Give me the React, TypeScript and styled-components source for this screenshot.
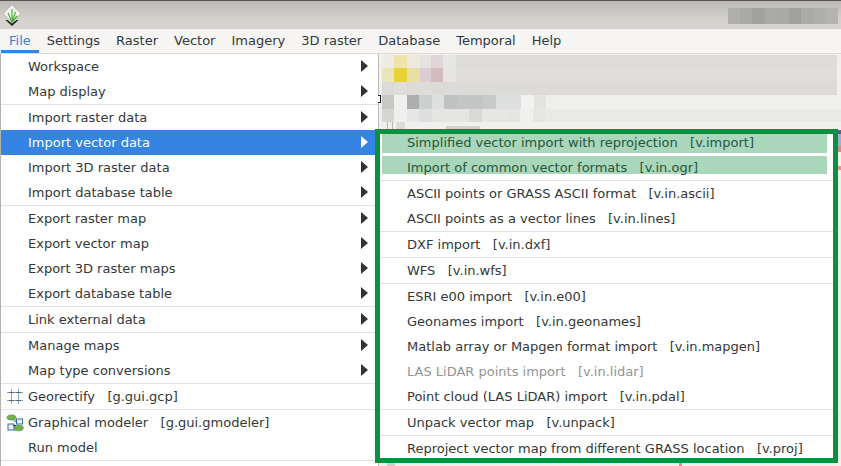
import React from 'react'
import styled, { createGlobalStyle } from 'styled-components'

const GlobalStyle = createGlobalStyle`
  html, body {
    margin: 0;
    padding: 0;
    background: #ffffff;
    overflow: hidden;
  }
  body {
    font-family: "DejaVu Sans", sans-serif;
    font-size: 13px;
    color: #33383a;
  }
`

const Window = styled.div`
  width: 841px;
  height: 466px;
  display: flex;
  flex-direction: column;
  overflow: hidden;
`

const TitleBar = styled.div`
  height: 29px;
  flex: none;
  box-sizing: border-box;
  display: flex;
  align-items: center;
  justify-content: space-between;
  padding: 1px 3px 0 2px;
  border-top: 1px solid #56564f;
  background: linear-gradient(#bcbab6, #d6d3cf 70%);
`

const Logo = styled.svg`
  width: 20px;
  height: 22px;
  margin-bottom: 1px;
`

const TitleBlur = styled.div`
  display: flex;
  height: 16px;
`

const Blur = styled.div<{ $w: number; $c: string }>`
  width: ${p => p.$w}px;
  flex: none;
  background: ${p => p.$c};
`

const MenuBar = styled.div`
  height: 25px;
  flex: none;
  box-sizing: border-box;
  display: flex;
  padding-left: 1px;
  background: #f6f5f4;
  border-bottom: 1px solid #dfdcd8;
`

const MenuTitle = styled.div<{ $open?: boolean }>`
  padding: 0 8px;
  line-height: 23px;
  height: 24px;
  box-sizing: border-box;
  color: ${p => (p.$open ? '#3584e4' : '#33383a')};
  box-shadow: ${p => (p.$open ? 'inset 0 -3px 0 #3584e4' : 'none')};
`

const Workspace = styled.div`
  position: relative;
  flex: 1;
  display: flex;
  min-height: 0;
`

const DropMenu = styled.div`
  width: 379px;
  flex: none;
  box-sizing: border-box;
  background: #ffffff;
  border-left: 1px solid #b4b3b0;
  border-right: 1px solid #bdbcba;
`

const Row = styled.div<{ $active?: boolean; $disabled?: boolean }>`
  position: relative;
  height: 25px;
  line-height: 25px;
  box-sizing: border-box;
  padding-left: 27px;
  white-space: pre;
  background: ${p => (p.$active ? '#3584e4' : 'transparent')};
  color: ${p => (p.$active ? '#ffffff' : p.$disabled ? '#929595' : '#33383a')};
`

const Arrow = styled.span<{ $active?: boolean }>`
  position: absolute;
  right: 10px;
  top: 6px;
  width: 0;
  height: 0;
  border-style: solid;
  border-width: 6px 0 6px 7px;
  border-color: transparent transparent transparent ${p => (p.$active ? '#ffffff' : '#2e3436')};
`

const RowIcon = styled.svg`
  position: absolute;
  left: 5px;
  top: 4px;
  width: 18px;
  height: 18px;
`

const Separator = styled.div`
  height: 1px;
  background: #e3e3e1;
`

const Canvas = styled.div`
  flex: 1;
  display: flex;
  flex-direction: column;
  padding: 1px 0 0 3px;
  background: #f1f0ee;
`

const BlurRow = styled.div<{ $h: number }>`
  display: flex;
  height: ${p => p.$h}px;
  flex: none;
`

const CanvasGap = styled.div`
  flex: 1;
`

const Submenu = styled.div`
  position: absolute;
  left: 380px;
  top: 76px;
  width: 453px;
  background: #ffffff;
`

const Frame = styled.div`
  position: absolute;
  left: 375px;
  top: 75px;
  width: 463px;
  height: 334px;
  box-sizing: border-box;
  border: 5px solid #0b8f40;
  padding: 0 6px 0 2px;
  pointer-events: none;
`

const Mark = styled.div<{ $h: number }>`
  height: ${p => p.$h}px;
  margin-bottom: 3px;
  background: rgba(11, 140, 62, 0.35);
`

const EdgeStrip = styled.div`
  position: absolute;
  left: 838px;
  top: 76px;
  width: 3px;
  display: flex;
  flex-direction: column;
`

const EdgeCell = styled.div<{ $h: number; $c: string }>`
  height: ${p => p.$h}px;
  background: ${p => p.$c};
`

const HandleBox = styled.div`
  position: absolute;
  left: 378px;
  top: 41px;
  width: 3px;
  height: 8px;
  box-sizing: border-box;
  border: 1px solid #222222;
  border-left: none;
  background: #ffffff;
`

const LeftItems: (string | { label: string; sub?: boolean; active?: boolean; icon?: 'gcp' | 'model' })[] = [
  { label: 'Workspace', sub: true },
  { label: 'Map display', sub: true },
  '-',
  { label: 'Import raster data', sub: true },
  { label: 'Import vector data', sub: true, active: true },
  { label: 'Import 3D raster data', sub: true },
  { label: 'Import database table', sub: true },
  '-',
  { label: 'Export raster map', sub: true },
  { label: 'Export vector map', sub: true },
  { label: 'Export 3D raster maps', sub: true },
  { label: 'Export database table', sub: true },
  '-',
  { label: 'Link external data', sub: true },
  '-',
  { label: 'Manage maps', sub: true },
  { label: 'Map type conversions', sub: true },
  '-',
  { label: 'Georectify   [g.gui.gcp]', icon: 'gcp' },
  '-',
  { label: 'Graphical modeler   [g.gui.gmodeler]', icon: 'model' },
  { label: 'Run model' },
  '-',
]

const RightItems: (string | { label: string; disabled?: boolean })[] = [
  { label: 'Simplified vector import with reprojection   [v.import]' },
  { label: 'Import of common vector formats   [v.in.ogr]' },
  '-',
  { label: 'ASCII points or GRASS ASCII format   [v.in.ascii]' },
  { label: 'ASCII points as a vector lines   [v.in.lines]' },
  '-',
  { label: 'DXF import   [v.in.dxf]' },
  '-',
  { label: 'WFS   [v.in.wfs]' },
  '-',
  { label: 'ESRI e00 import   [v.in.e00]' },
  { label: 'Geonames import   [v.in.geonames]' },
  { label: 'Matlab array or Mapgen format import   [v.in.mapgen]' },
  { label: 'LAS LiDAR points import   [v.in.lidar]', disabled: true },
  { label: 'Point cloud (LAS LiDAR) import   [v.in.pdal]' },
  '-',
  { label: 'Unpack vector map   [v.unpack]' },
  '-',
  { label: 'Reproject vector map from different GRASS location   [v.proj]' },
]

const MenuTitles = ['File', 'Settings', 'Raster', 'Vector', 'Imagery', '3D raster', 'Database', 'Temporal', 'Help']

const TitleCells: [number, string][] = [
  [12, '#afafab'], [12, '#a9a9a5'], [13, '#a1a29e'], [12, '#abaaa7'], [12, '#a9a9a6'],
  [12, '#a0a09d'], [13, '#aaaaa7'], [12, '#aeaeaa'], [12, '#b4b3b0'],
]

// pixelated content behind the menus
const BlurRows: { h: number; cells: [number, string][] }[] = [
  {
    h: 13,
    cells: [[12, '#f0ece3'], [13, '#eee4ac'], [13, '#eeeadb'], [11, '#e5e3e1'], [12, '#e0d5d8'], [13, '#e6e6e4'], [381, '#dddcda']],
  },
  {
    h: 14,
    cells: [[12, '#ebe5bd'], [13, '#e8d23a'], [13, '#e9dfa4'], [11, '#dccdd2'], [12, '#d2bcc0'], [13, '#e6e5e4'], [381, '#dfdedc']],
  },
  {
    h: 13,
    cells: [[12, '#dadad8'], [13, '#dfded8'], [13, '#dcdbd8'], [12, '#dddcd9'], [13, '#dcdad7'], [392, '#dcdbd9']],
  },
  {
    h: 14,
    cells: [
      [12, '#c8c8c7'], [13, '#f1f0ee'], [12, '#adaeae'], [13, '#cbcfce'], [12, '#dde0df'], [13, '#bfc1c3'],
      [13, '#c4c6c5'], [13, '#c4c6c5'], [13, '#c8cac9'], [13, '#dee0df'], [12, '#dde0df'], [13, '#f2f2f0'],
      [12, '#e3e3e1'], [13, '#efefed'], [311, '#f0f0ee'],
    ],
  },
  {
    h: 13,
    cells: [
      [12, '#d5d5d4'], [13, '#efefed'], [12, '#e7e7e8'], [13, '#dfdfdf'], [12, '#e4e4e3'], [25, '#e5e5e4'],
      [13, '#d9d9d8'], [25, '#e6e6e5'], [13, '#e4e4e2'], [13, '#f0f0ee'], [12, '#e6e6e4'], [302, '#e9e9e7']],
  },
  {
    h: 4,
    cells: [[5, '#f1f0ee'], [1, '#b5b5b3'], [4, '#f1f0ee'], [1, '#b5b5b3'], [3, '#f1f0ee'], [9, '#dddcd9']],
  },
  {
    h: 3,
    cells: [[5, '#f1f0ee'], [1, '#b5b5b3'], [4, '#f1f0ee'], [1, '#b5b5b3'], [3, '#f1f0ee'], [9, '#dddcd9'], [41, '#f1f0ee'], [34, '#d2d1ce']],
  },
]

const BottomCells: [number, string][] = [
  [5, '#f1f0ee'], [8, '#cfcfcd'], [284, '#f1f0ee'], [3, '#f08a8a'],
]

const EdgeCells: [number, string][] = [
  [4, '#4f6482'], [12, '#9db2c9'], [6, '#d9878c'], [14, '#f4f3f1'], [4, '#ee8f8f'],
]

const GrassLogo = () => (
  <Logo viewBox="0 0 20 22">
    <path d="M10 0.5 L19 9.5 L10 18.5 L1 9.5 Z" fill="#f3f4ee" stroke="#9a9c94" strokeWidth="0.7" />
    <path d="M3.5 16 L10 22 L16.5 16 L14.5 16 L10 19.5 L5.5 16 Z" fill="#23251f" />
    <path d="M10 18 L6 9 M10 18 L10 5 M10 18 L13.5 8 M10 18 L15 12" stroke="#4cb136" strokeWidth="1.2" fill="none" />
  </Logo>
)

const GcpIcon = () => (
  <RowIcon viewBox="0 0 18 18">
    <path d="M5.5 1 V16 M12.5 1 V16 M1 4.5 H17 M1 12.5 H17" stroke="#8aa3b8" strokeWidth="1" fill="none" />
    <path d="M3 4.5 H8 M10 4.5 H15 M3 12.5 H8 M10 12.5 H15" stroke="#56697a" strokeWidth="1" fill="none" />
  </RowIcon>
)

const ModelIcon = () => (
  <RowIcon viewBox="0 0 18 18">
    <ellipse cx="5.5" cy="3.5" rx="4.5" ry="2.6" fill="#6fb24f" stroke="#3f7f2f" strokeWidth="0.6" />
    <ellipse cx="12.5" cy="14" rx="4.8" ry="2.8" fill="#6fb24f" stroke="#3f7f2f" strokeWidth="0.6" />
    <rect x="10.5" y="5" width="6" height="5" fill="#e8eef5" stroke="#3a6ea5" strokeWidth="1" />
    <rect x="2" y="10" width="6" height="6" fill="#e8eef5" stroke="#3a6ea5" strokeWidth="1" />
    <path d="M8 7 H11 M10 11.5 H7" stroke="#2a3f57" strokeWidth="1" />
  </RowIcon>
)

const App: React.FC = () => {
  return (
    <Window>
      <GlobalStyle />
      <TitleBar>
        <GrassLogo />
        <TitleBlur>
          {TitleCells.map(([w, c], i) => (
            <Blur key={i} $w={w} $c={c} />
          ))}
        </TitleBlur>
      </TitleBar>
      <MenuBar>
        {MenuTitles.map((t, i) => (
          <MenuTitle key={t} $open={i === 0}>{t}</MenuTitle>
        ))}
      </MenuBar>
      <Workspace>
        <DropMenu>
          {LeftItems.map((item, i) =>
            typeof item === 'string' ? (
              <Separator key={i} />
            ) : (
              <Row key={i} $active={item.active}>
                {item.icon === 'gcp' && <GcpIcon />}
                {item.icon === 'model' && <ModelIcon />}
                {item.label}
                {item.sub && <Arrow $active={item.active} />}
              </Row>
            )
          )}
        </DropMenu>
        <Canvas>
          {BlurRows.map((r, i) => (
            <BlurRow key={i} $h={r.h}>
              {r.cells.map(([w, c], j) => (
                <Blur key={j} $w={w} $c={c} />
              ))}
            </BlurRow>
          ))}
          <CanvasGap />
          <BlurRow $h={3}>
            {BottomCells.map(([w, c], j) => (
              <Blur key={j} $w={w} $c={c} />
            ))}
          </BlurRow>
        </Canvas>
        <HandleBox />
        <EdgeStrip>
          {EdgeCells.map(([h, c], i) => (
            <EdgeCell key={i} $h={h} $c={c} />
          ))}
        </EdgeStrip>
        <Submenu>
          {RightItems.map((item, i) =>
            typeof item === 'string' ? (
              <Separator key={i} />
            ) : (
              <Row key={i} $disabled={item.disabled}>{item.label}</Row>
            )
          )}
        </Submenu>
        <Frame>
          <Mark $h={19} />
          <Mark $h={18} />
        </Frame>
      </Workspace>
    </Window>
  )
}

export default App
